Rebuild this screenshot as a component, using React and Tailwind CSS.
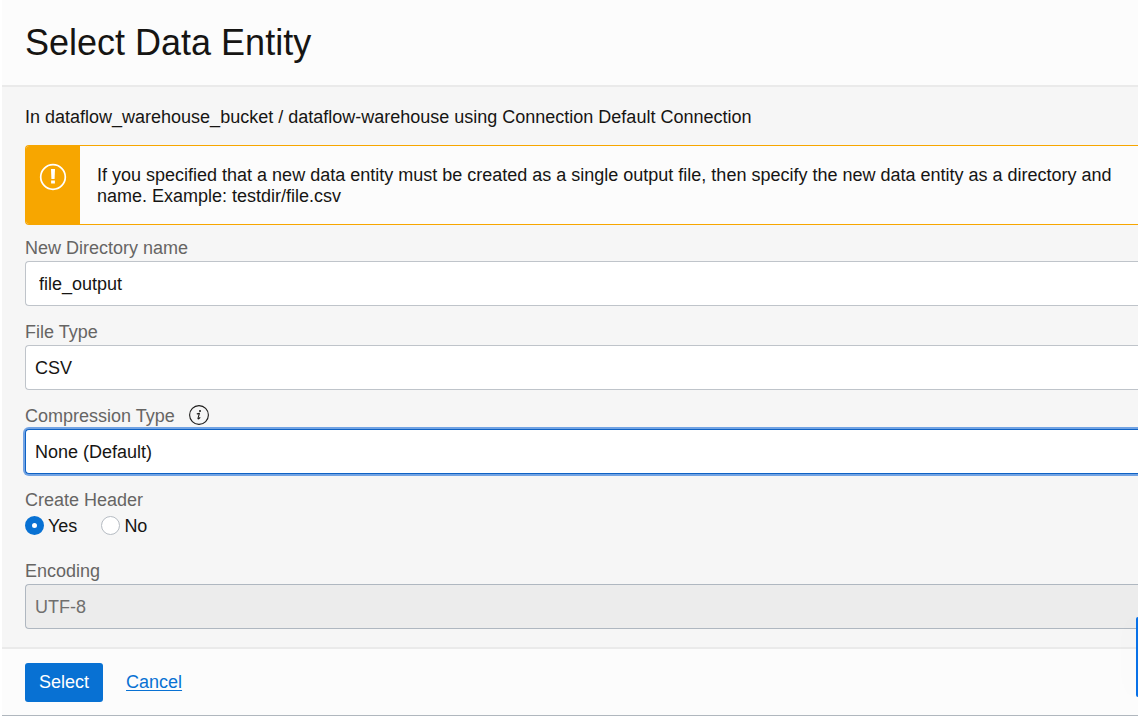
import React from "react";

const labelClass = "flex h-[25px] items-center text-[18px] text-[#666564]";
const controlClass =
  "block h-[45px] w-full appearance-none rounded-l-[4px] border border-r-0 pr-3 pt-0.5 text-[18px] outline-none";

function WarningIcon() {
  return (
    <svg viewBox="0 0 28 28" className="size-7" fill="none" aria-hidden="true">
      <circle cx="14" cy="14" r="12.3" stroke="#fff" strokeWidth="1.7" />
      <path d="M12 6h4l-.4 10h-3.2z" fill="#fff" />
      <path d="M12.1 17.6h3.8v3h-3.8z" fill="#fff" />
    </svg>
  );
}

function InfoIcon() {
  return (
    <svg viewBox="0 0 22 22" className="block size-[22px]" fill="none" aria-hidden="true">
      <circle cx="11" cy="11" r="9.4" stroke="#1c1b1a" strokeWidth="1.1" />
      <circle cx="12" cy="6.9" r="1" fill="#1c1b1a" />
      <path
        d="M9.2 9.9l2.2-.5-1.4 4.9c-.2.9.6 1 1.9-.6"
        stroke="#1c1b1a"
        strokeWidth="1.1"
        strokeLinecap="round"
        strokeLinejoin="round"
      />
    </svg>
  );
}

function Radio({ label, ...props }) {
  return (
    <label className="flex items-center gap-1 text-[18px]">
      <input
        type="radio"
        name="header"
        className="size-[19px] appearance-none rounded-full border border-[#b6bcc3] bg-white outline-none checked:border-[7px] checked:border-[#0871d3]"
        {...props}
      />
      <span className="pt-0.5">{label}</span>
    </label>
  );
}

export default function App() {
  return (
    <div className="relative min-h-screen overflow-hidden bg-white pl-0.5 pr-px font-['Liberation_Sans',Arial,sans-serif] text-[#161513]">
      <main className="overflow-hidden border-b border-[#b0b7be] bg-[#f6f6f6]">
        <header className="flex h-[87px] items-center border-b-2 border-[#eaeaea] bg-[#fcfcfc] pl-[23px]">
          <h1 className="text-[36px] leading-[44px]">Select Data Entity</h1>
        </header>

        <form id="entity-form" className="pb-[18px] pl-[23px] pt-[18px]">
          <p className="text-[18px] leading-6">
            In dataflow_warehouse_bucket / dataflow-warehouse using Connection Default Connection
          </p>

          <div
            role="alert"
            className="mb-[11px] mt-4 flex h-20 overflow-hidden rounded-l-[4px] border border-r-0 border-[#f7a600] bg-[#fcfcfc]"
          >
            <div className="flex w-[54px] shrink-0 justify-center bg-[#f7a600] pt-[17px]">
              <WarningIcon />
            </div>
            <p className="pl-[17px] pt-[19px] text-[18px] leading-[21px]">
              <span className="block whitespace-nowrap">
                If you specified that a new data entity must be created as a single output file, then specify the new data entity as a directory and
              </span>
              name. Example: testdir/file.csv
            </p>
          </div>

          <label htmlFor="directory" className={labelClass}>New Directory name</label>
          <input
            id="directory"
            type="text"
            defaultValue="file_output"
            className={`${controlClass} border-[#bfc4ca] bg-white pl-[13px]`}
          />

          <label htmlFor="file-type" className={`${labelClass} mt-[14px]`}>File Type</label>
          <select id="file-type" className={`${controlClass} border-[#bfc4ca] bg-white pl-[9px]`}>
            <option>CSV</option>
          </select>

          <div className="mt-[14px] flex h-[25px] items-start gap-[13px]">
            <label htmlFor="compression" className={labelClass}>Compression Type</label>
            <button type="button" aria-label="About compression type">
              <InfoIcon />
            </button>
          </div>
          <select
            id="compression"
            className={`${controlClass} border-[#0f62c4] bg-white pl-[9px] ring-2 ring-[#72a3e3]`}
          >
            <option>None (Default)</option>
          </select>

          <fieldset className="mt-[14px]">
            <legend className={labelClass}>Create Header</legend>
            <div className="flex h-6 items-center gap-6">
              <Radio label="Yes" defaultChecked />
              <Radio label="No" />
            </div>
          </fieldset>

          <label htmlFor="encoding" className={`${labelClass} mt-[22px]`}>Encoding</label>
          <input
            id="encoding"
            type="text"
            disabled
            defaultValue="UTF-8"
            className={`${controlClass} border-[#afb7c0] bg-[#ececec] pl-[9px] text-[#706f6e]`}
          />
        </form>

        <footer className="flex h-[68px] items-center gap-[23px] border-t-2 border-[#eaeaea] bg-[#fcfcfc] pl-[23px]">
          <button
            type="submit"
            form="entity-form"
            className="h-[39px] rounded-[3px] bg-[#0871d3] px-[14px] text-[18px] text-white"
          >
            Select
          </button>
          <a href="#cancel" className="text-[18px] text-[#0871d3] underline underline-offset-2">
            Cancel
          </a>
        </footer>
      </main>

      <div className="absolute right-px top-[617px] h-20 w-0.5 rounded-l-[3px] bg-[#0871e8] shadow-[0_0_26px_rgba(0,0,0,0.12)]" />
    </div>
  );
}
